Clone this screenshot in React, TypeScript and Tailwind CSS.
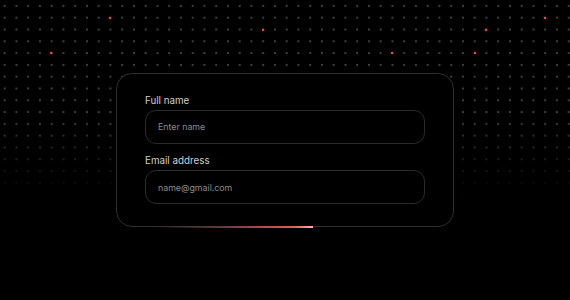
import React from 'react';

const redDots = [
  { x: 110, y: 18 },
  { x: 545, y: 18 },
  { x: 263, y: 30 },
  { x: 486, y: 30 },
  { x: 51, y: 53 },
  { x: 392, y: 53 },
  { x: 475, y: 53 },
];

function Field({ label, placeholder, className }: { label: string; placeholder: string; className?: string }) {
  return (
    <div className={className}>
      <label className="block text-[9.8px] leading-[14px] text-[#cfcfcf]">{label}</label>
      <input
        type="text"
        placeholder={placeholder}
        className="mt-[2px] block h-[34px] w-full rounded-[11px] border border-[#2a2a2a] bg-transparent px-3 text-[8.8px] text-[#e5e5e5] outline-none placeholder:text-[#8a8a8a]"
      />
    </div>
  );
}

export default function App() {
  return (
    <div
      className="relative flex h-[300px] w-[570px] items-center justify-center overflow-hidden bg-black [background-image:linear-gradient(to_bottom,transparent_38%,#000_66%),radial-gradient(circle,#404040_0.75px,transparent_1.35px)] [background-position:0_0,-1.2px_0px] [background-size:100%_100%,11.75px_11.8px]"
      style={{ fontFamily: 'Inter, "Noto Sans", sans-serif' }}
    >
      {redDots.map((d, i) => (
        <span
          key={i}
          className="absolute h-[2px] w-[2px] rounded-full bg-[#ff5a5a] shadow-[0_0_3px_#ff4040]"
          style={{ left: d.x - 1, top: d.y - 1 }}
        />
      ))}

      <div className="relative w-[338px] rounded-2xl border-[1.5px] border-[#2e2e2e] bg-black px-[28px] pt-[20px] pb-[22px]">
        <Field label="Full name" placeholder="Enter name" />
        <Field label="Email address" placeholder="name@gmail.com" className="mt-[10.5px]" />
        <span className="absolute bottom-[-1.5px] left-[37px] h-[1.5px] w-[159px] bg-[linear-gradient(to_right,transparent,#5a3a3a_40%,#e85a5a_88%,#ffb0b0)]" />
      </div>
    </div>
  );
}
